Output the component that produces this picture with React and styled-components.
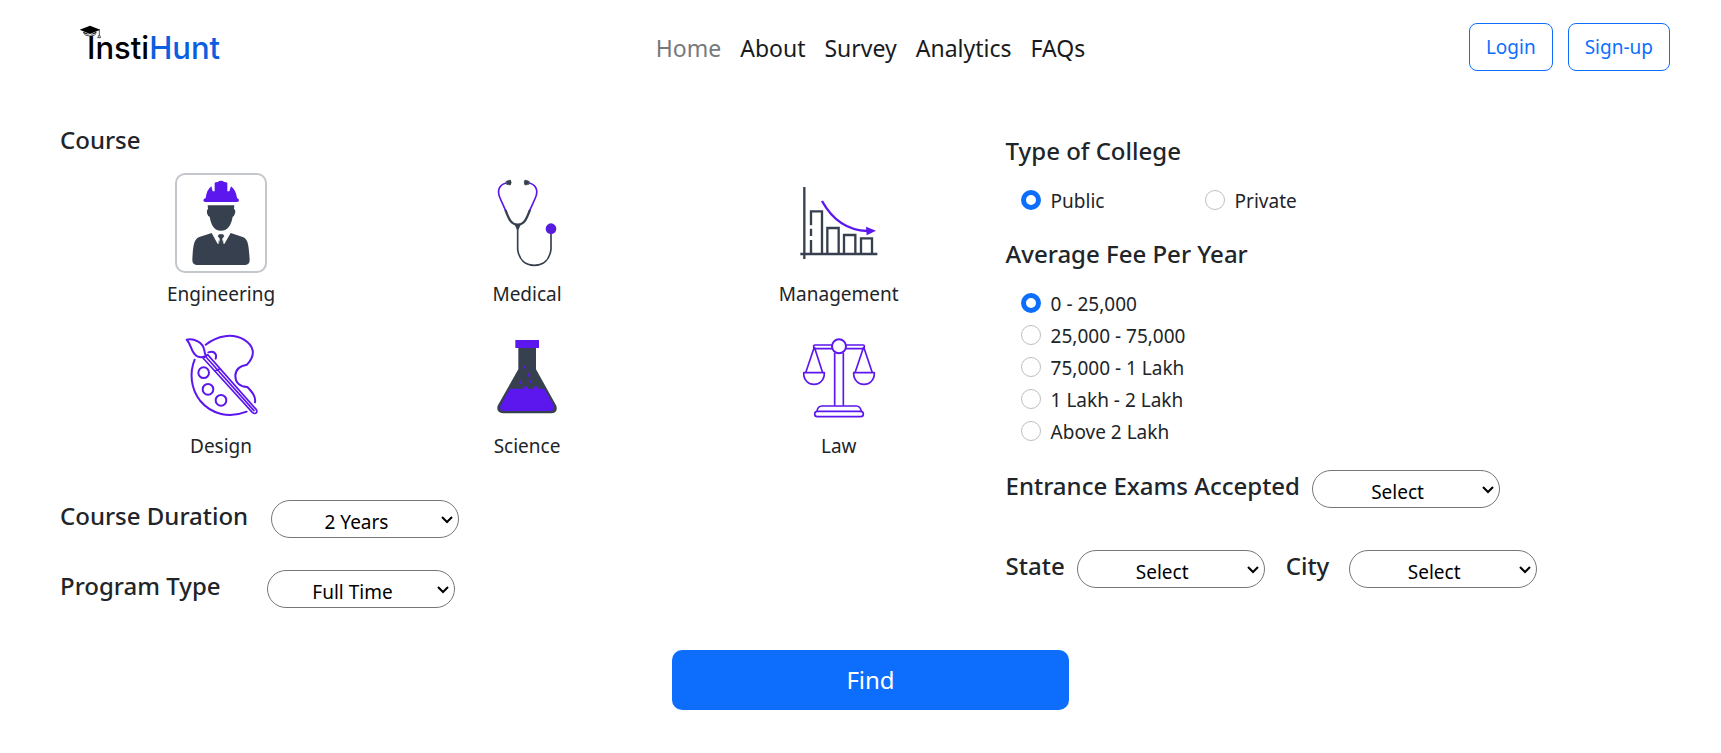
import React, { useState } from "react";
import styled, { createGlobalStyle } from "styled-components";

const violet = "#5c16ee";
const slate = "#37404e";

const GlobalStyle = createGlobalStyle`
  *, *::before, *::after { box-sizing: border-box; }
  body {
    margin: 0;
    background: #fff;
    color: #212529;
    font-family: "Noto Sans", "Open Sans", sans-serif;
    font-size: 19px;
    line-height: 30px;
  }
  button, select, input { font: inherit; color: inherit; margin: 0; }
`;

const Header = styled.header`
  display: grid;
  grid-template-columns: 1fr auto 1fr;
  align-items: start;
  padding: 23px 51px 0 71px;
`;

const Logo = styled.a`
  position: relative;
  justify-self: start;
  margin-left: 16px;
  color: #000;
  font-family: Inter, sans-serif;
  font-size: 31px;
  font-weight: 500;
  line-height: 50px;
  text-decoration: none;
`;

const LogoAccent = styled.span`
  color: #0a5fe0;
`;

const LogoCap = styled.svg`
  position: absolute;
  left: -8px;
  top: 2px;
  width: 22px;
  height: 14px;
`;

const Nav = styled.nav`
  display: flex;
  gap: 19px;
`;

const NavLink = styled.a`
  color: ${(p) => (p.$muted ? "#75797c" : "#191b1d")};
  font-size: 23px;
  line-height: 50px;
  text-decoration: none;
`;

const Actions = styled.div`
  display: flex;
  justify-content: flex-end;
  gap: 15px;
`;

const OutlineButton = styled.button`
  height: 48px;
  padding: 0 16px;
  border: 1px solid #0d6efd;
  border-radius: 8px;
  background: #fff;
  color: #0d6efd;
  cursor: pointer;
`;

const Form = styled.form`
  padding: 51px 40px 40px 60px;
`;

const Columns = styled.div`
  display: grid;
  grid-template-columns: 7fr 5fr;
`;

const Side = styled.div`
  padding-top: 11px;
`;

const Group = styled.fieldset`
  min-width: 0;
  margin: 0 0 ${(p) => p.$after}px;
  padding: 0;
  border: 0;
`;

const Legend = styled.legend`
  padding: 0;
  margin-bottom: ${(p) => p.$gap || 18}px;
  font-size: 24px;
  font-weight: 500;
  line-height: 32px;
`;

const CourseGrid = styled.div`
  display: grid;
  grid-template-columns: repeat(3, auto);
  justify-content: space-around;
  justify-items: center;
  row-gap: 16px;
  padding: 0 4px;
`;

const CourseButton = styled.button`
  display: flex;
  flex-direction: column;
  align-items: center;
  gap: 6px;
  padding: 0;
  border: 0;
  background: none;
  cursor: pointer;
`;

const Tile = styled.span`
  display: block;
  width: 92px;
  height: 100px;
  border: 2px solid ${(p) => (p.$active ? "#c3c7cb" : "transparent")};
  border-radius: 10px;

  svg { display: block; width: 100%; height: 100%; }
`;

const Options = styled.div`
  display: flex;
  flex-direction: ${(p) => (p.$inline ? "row" : "column")};
  gap: ${(p) => (p.$inline ? "16px" : "0")};
  padding-left: 15px;
`;

const Option = styled.label`
  display: flex;
  align-items: center;
  gap: 10px;
  min-width: 168px;
  line-height: 32px;
`;

const Radio = styled.input`
  appearance: none;
  width: 20px;
  height: 20px;
  border: 1px solid #bfbfbf;
  border-radius: 50%;
  background: #fff;

  && { margin-bottom: 2px; }
  &:checked { border: 5px solid #0d6efd; }
`;

const Fields = styled.div`
  display: flex;
  gap: 21px;
  margin-bottom: ${(p) => p.$after || 0}px;
`;

const Field = styled.div`
  display: flex;
  align-items: flex-start;
  gap: 12px;
`;

const FieldLabel = styled.label`
  min-width: ${(p) => p.$width || 0}px;
  font-size: 24px;
  font-weight: 500;
  line-height: 32px;
  white-space: nowrap;
`;

const SelectBox = styled.div`
  position: relative;
  width: 188px;
`;

const Select = styled.select`
  appearance: none;
  display: block;
  width: 100%;
  height: 38px;
  padding: 5px 17px 0 0;
  border: 1px solid #767676;
  border-radius: 19px;
  background: #fff;
  color: #000;
  text-align: center;
`;

const Chevron = styled.svg`
  position: absolute;
  right: 6px;
  top: 15px;
  width: 12px;
  height: 9px;
  pointer-events: none;
`;

const FindButton = styled.button`
  display: block;
  width: 397px;
  max-width: 100%;
  height: 60px;
  margin: 42px auto 0;
  border: 0;
  border-radius: 10px;
  background: #0d6efd;
  color: #fff;
  font-size: 24px;
  cursor: pointer;
`;

const EngineerIcon = () => (
  <svg viewBox="84 45 264 288" aria-hidden="true">
    <g fill={violet}>
      <path d="M170 114 C172 98 177 87 187 79 L191 94 L197 94 L197 69 Q198 66 207 66 Q209 62 216 62 Q223 62 225 66 Q234 66 235 69 L235 94 L241 94 L246 79 C256 87 262 98 264 114 Q270 116 270 121 Q270 126 264 126 L169 126 Q163 126 163 121 Q163 116 170 114Z" />
    </g>
    <g fill={slate}>
      <path d="M176 136 H256 L255 147 Q261 150 258 160 Q256 169 251 170 C247 194 237 212 216 212 C195 212 186 194 182 170 Q176 169 174 160 Q172 150 177 147Z" />
      <path d="M188 219 L206 252 L211 237 L206 229 L210 223 L222 223 L226 229 L221 237 L226 252 L245 219 L281 231 C297 237 299 252 302 300 Q302 314 289 315 H143 Q130 314 130 300 C132 252 136 237 151 231Z" />
    </g>
    <path d="M208 252 L212 237 L206 229 M225 252 L220 237 L226 229" stroke="#fff" strokeWidth="2" fill="none" />
  </svg>
);

const StethoscopeIcon = () => (
  <svg viewBox="39 45 264 288" fill="none" strokeWidth="5" strokeLinecap="round" aria-hidden="true">
    <path d="M108 69 C88 74 80 92 90 114 L107 152 M179 152 L196 114 C206 92 198 74 178 69" stroke={violet} />
    <path d="M107 152 C116 176 123 194 143 194 C163 194 170 176 179 152" stroke={slate} strokeWidth="7" />
    <path d="M143 200 V268 C147 298 165 316 193 316 C221 316 239 298 243 268 V222" stroke={slate} />
    <path d="M134 194 H152 L146 208 H140Z" fill={slate} />
    <path d="M109 64 L121 60 Q126 67 121 75 L110 73Z M177 64 L165 60 Q160 67 165 75 L176 73Z" fill={slate} stroke={slate} strokeWidth="2" />
    <circle cx="243" cy="206" r="16" fill={violet} />
    <circle cx="243" cy="206" r="10" stroke="#452fa8" strokeWidth="3" />
  </svg>
);

const ChartIcon = () => (
  <svg viewBox="73 45 264 288" fill="none" strokeWidth="7" aria-hidden="true">
    <path d="M101 81 V297 M89 282 H320" stroke={slate} />
    <path d="M121 196 V154 H154 V280 M121 206 V228 M121 240 V280 M170 280 V204 H204 V280 M220 280 V225 H254 V280 M271 280 V235 H304 V280" stroke={slate} />
    <path d="M154 123 Q202 210 290 213" stroke={violet} />
    <path d="M286 200 L316 212 L288 226Z" fill={violet} />
  </svg>
);

const PaletteIcon = () => (
  <svg viewBox="54 21 264 288" fill="none" stroke={violet} strokeWidth="6" strokeLinecap="round" strokeLinejoin="round" aria-hidden="true">
    <path d="M140 74 C176 46 220 39 255 59 C286 78 291 105 264 134 C239 138 229 151 229 168 C229 187 242 200 265 201 C279 216 291 228 288 247" />
    <path d="M107 119 C91 158 95 206 124 243 C158 283 210 296 263 275" />
    <path d="M83 59 C105 55 132 66 136 91 Q137 103 142 108 Q128 115 115 109 C94 98 99 74 83 59Z" />
    <path d="M132 114 L146 104 L292 269 Q296 276 290 280 Q285 282 280 277Z M141 111 L285 272 M167 153 L180 148" strokeWidth="5" />
    <path d="M148 97 Q166 91 171 105 Q172 112 170 116" />
    <circle cx="134" cy="158" r="16" />
    <circle cx="147" cy="208" r="16" />
    <circle cx="186" cy="241" r="16" />
  </svg>
);

const FlaskIcon = () => (
  <svg viewBox="9 6 264 288" aria-hidden="true">
    <path d="M115 66 H168 V133 L229 242 Q235 263 213 265 H70 Q47 263 53 242 L115 133Z" fill={slate} />
    <g fill={violet}>
      <rect x="106" y="45" width="71" height="24" />
      <path d="M90 191 H130 Q130 183 137 183 Q144 184 144 191 H162 Q162 183 169 183 Q175 184 175 191 H193 L222 242 Q225 256 211 258 H72 Q57 256 61 242Z" />
      <circle cx="134" cy="127" r="4" />
      <circle cx="146" cy="150" r="5" />
      <circle cx="122" cy="173" r="4" />
      <circle cx="151" cy="170" r="4" />
    </g>
  </svg>
);

const ScalesIcon = () => (
  <svg viewBox="42 6 264 288" fill="none" stroke={violet} strokeWidth="5" strokeLinejoin="round" aria-hidden="true">
    <path d="M153 60 H101 Q96 60 99 71 H154 M195 60 H247 Q252 60 249 71 H194" />
    <circle cx="174" cy="64" r="21" strokeWidth="6" />
    <path d="M161 84 V242 M187 84 V242" />
    <path d="M100 66 L74 143 M100 66 L125 143 M248 66 L222 143 M248 66 L274 143" />
    <path d="M68 143 H130 C131 190 67 190 68 143Z M218 143 H280 C281 190 217 190 218 143Z" />
    <path d="M108 259 Q110 243 123 243 H226 Q238 243 241 259" />
    <rect x="101" y="259" width="146" height="16" rx="8" />
  </svg>
);

const courses = [
  ["Engineering", EngineerIcon],
  ["Medical", StethoscopeIcon],
  ["Management", ChartIcon],
  ["Design", PaletteIcon],
  ["Science", FlaskIcon],
  ["Law", ScalesIcon],
];

const fees = ["0 - 25,000", "25,000 - 75,000", "75,000 - 1 Lakh", "1 Lakh - 2 Lakh", "Above 2 Lakh"];

function RadioGroup({ legend, name, options, inline, after }) {
  return (
    <Group $after={after}>
      <Legend>{legend}</Legend>
      <Options $inline={inline}>
        {options.map((text, i) => (
          <Option key={text}>
            <Radio type="radio" name={name} value={text} defaultChecked={i === 0} />
            {text}
          </Option>
        ))}
      </Options>
    </Group>
  );
}

function SelectField({ id, label, options, width }) {
  return (
    <Field>
      <FieldLabel htmlFor={id} $width={width}>{label}</FieldLabel>
      <SelectBox>
        <Select id={id}>
          {options.map((o) => <option key={o}>{o}</option>)}
        </Select>
        <Chevron viewBox="0 0 12 9" aria-hidden="true">
          <path d="M1 2 L6 7 L11 2" fill="none" stroke="#000" strokeWidth="2" />
        </Chevron>
      </SelectBox>
    </Field>
  );
}

export default function App() {
  const [course, setCourse] = useState("Engineering");
  return (
    <>
      <GlobalStyle />
      <Header>
        <Logo href="#">
          <LogoCap viewBox="0 0 66 42" aria-hidden="true">
            <path d="M2 14 L33 2 L64 14 L33 27Z M13 20 L33 29 L52 20 V24 Q33 33 13 24Z" fill="#000" />
            <path d="M14 25 Q18 33 33 33 Q48 33 52 25 M61 15 V29 M61 29 L56 38 H65Z" fill="none" stroke="#000" strokeWidth="2" />
          </LogoCap>
          Insti<LogoAccent>Hunt</LogoAccent>
        </Logo>
        <Nav>
          <NavLink href="#" $muted>Home</NavLink>
          <NavLink href="#">About</NavLink>
          <NavLink href="#">Survey</NavLink>
          <NavLink href="#">Analytics</NavLink>
          <NavLink href="#">FAQs</NavLink>
        </Nav>
        <Actions>
          <OutlineButton type="button">Login</OutlineButton>
          <OutlineButton type="button">Sign-up</OutlineButton>
        </Actions>
      </Header>
      <Form onSubmit={(e) => e.preventDefault()}>
        <Columns>
          <div>
            <Group $after={39}>
              <Legend $gap={17}>Course</Legend>
              <CourseGrid>
                {courses.map(([name, Icon]) => (
                  <CourseButton key={name} type="button" aria-pressed={course === name} onClick={() => setCourse(name)}>
                    <Tile $active={course === name}><Icon /></Tile>
                    {name}
                  </CourseButton>
                ))}
              </CourseGrid>
            </Group>
            <Fields $after={32}>
              <SelectField id="duration" label="Course Duration" width={199} options={["2 Years", "3 Years", "4 Years"]} />
            </Fields>
            <Fields>
              <SelectField id="program" label="Program Type" width={195} options={["Full Time", "Part Time"]} />
            </Fields>
          </div>
          <Side>
            <RadioGroup legend="Type of College" name="college" options={["Public", "Private"]} inline after={21} />
            <RadioGroup legend="Average Fee Per Year" name="fee" options={fees} after={22} />
            <Fields $after={42}>
              <SelectField id="exams" label="Entrance Exams Accepted" options={["Select"]} />
            </Fields>
            <Fields>
              <SelectField id="state" label="State" options={["Select"]} />
              <SelectField id="city" label="City" width={51} options={["Select"]} />
            </Fields>
          </Side>
        </Columns>
        <FindButton type="submit">Find</FindButton>
      </Form>
    </>
  );
}
